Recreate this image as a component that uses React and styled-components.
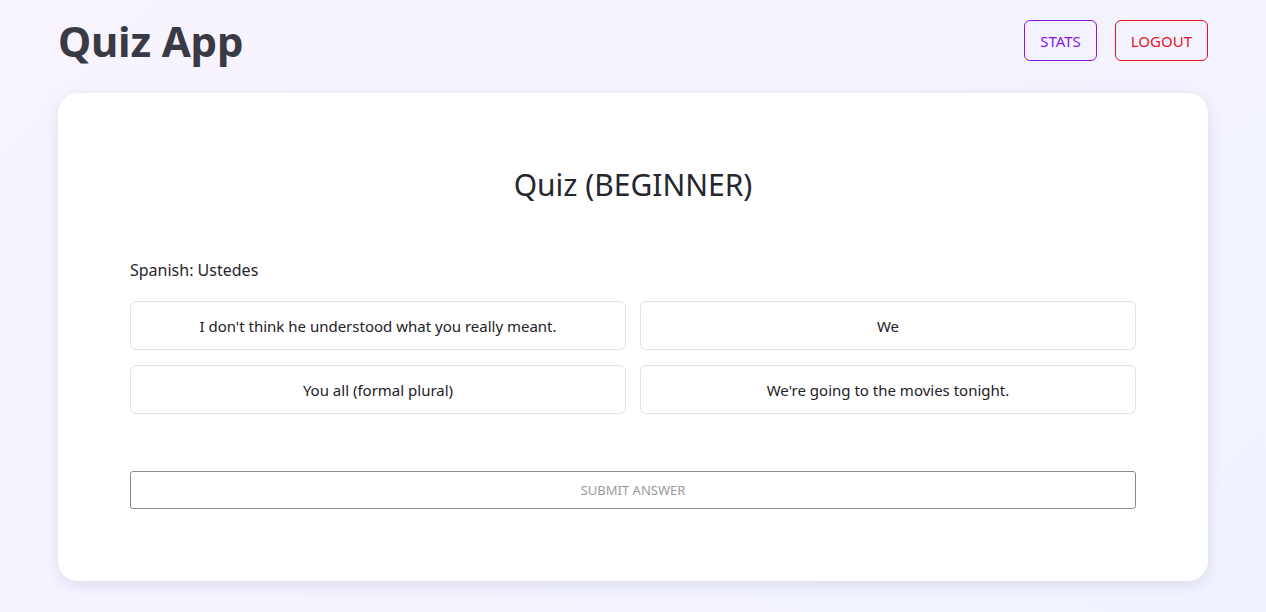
import styled, { createGlobalStyle } from 'styled-components';

const GlobalStyle = createGlobalStyle`
  html, body {
    margin: 0;
    padding: 0;
  }
  body {
    min-height: 100vh;
    font-family: 'Noto Sans', 'Open Sans', sans-serif;
    background: linear-gradient(135deg, #f8f4fe 0%, #f0f3ff 100%);
    color: #26262e;
  }
`;

const options = [
  "I don't think he understood what you really meant.",
  'We',
  'You all (formal plural)',
  "We're going to the movies tonight.",
];

const App = () => {
  return (
    <>
      <GlobalStyle />
      <Page>
        <Header>
          <Title>Quiz App</Title>
          <Actions>
            <OutlineButton $color='#8a14e6'>STATS</OutlineButton>
            <OutlineButton $color='#e6141e'>LOGOUT</OutlineButton>
          </Actions>
        </Header>
        <Card>
          <QuizTitle>Quiz (BEGINNER)</QuizTitle>
          <Question>Spanish: Ustedes</Question>
          <OptionGrid>
            {options.map((opt) => (
              <Option key={opt}>{opt}</Option>
            ))}
          </OptionGrid>
          <SubmitButton disabled>SUBMIT ANSWER</SubmitButton>
        </Card>
      </Page>
    </>
  );
};

const Page = styled.div`
  width: 1150px;
  margin: 0 auto;
  padding-top: 20px;
`;

const Header = styled.header`
  display: flex;
  align-items: center;
  justify-content: space-between;
  height: 41px;
  margin-bottom: 32px;
`;

const Title = styled.h1`
  margin: 0;
  font-size: 42px;
  font-weight: 700;
  color: #3a3a44;
  letter-spacing: -0.2px;
`;

const Actions = styled.div`
  display: flex;
  gap: 18px;
`;

const OutlineButton = styled.button`
  height: 41px;
  padding: 0 15px;
  font-family: inherit;
  font-size: 15px;
  color: ${(p) => p.$color};
  background: transparent;
  border: 1px solid ${(p) => p.$color};
  border-radius: 6px;
  cursor: pointer;
`;

const Card = styled.main`
  background: #fff;
  border-radius: 20px;
  box-shadow: 0 4px 14px rgba(120, 110, 160, 0.18);
  padding: 71px 72px 72px;
`;

const QuizTitle = styled.h2`
  margin: 0 0 54px;
  text-align: center;
  font-size: 30px;
  font-weight: 400;
  color: #26262e;
`;

const Question = styled.p`
  margin: 0 0 20px;
  font-size: 16px;
  color: #26262e;
`;

const OptionGrid = styled.div`
  display: grid;
  grid-template-columns: 1fr 1fr;
  gap: 15px 14px;
  margin-bottom: 57px;
`;

const Option = styled.button`
  height: 49px;
  background: #fff;
  border: 1px solid #e2e2e6;
  border-radius: 6px;
  font-family: inherit;
  font-size: 15px;
  color: #222228;
  cursor: pointer;
`;

const SubmitButton = styled.button`
  display: block;
  width: 100%;
  height: 38px;
  background: #fff;
  border: 1px solid #8a8a8a;
  border-radius: 3px;
  font-family: inherit;
  font-size: 13px;
  color: #9a9a9a;
`;

export default App;
